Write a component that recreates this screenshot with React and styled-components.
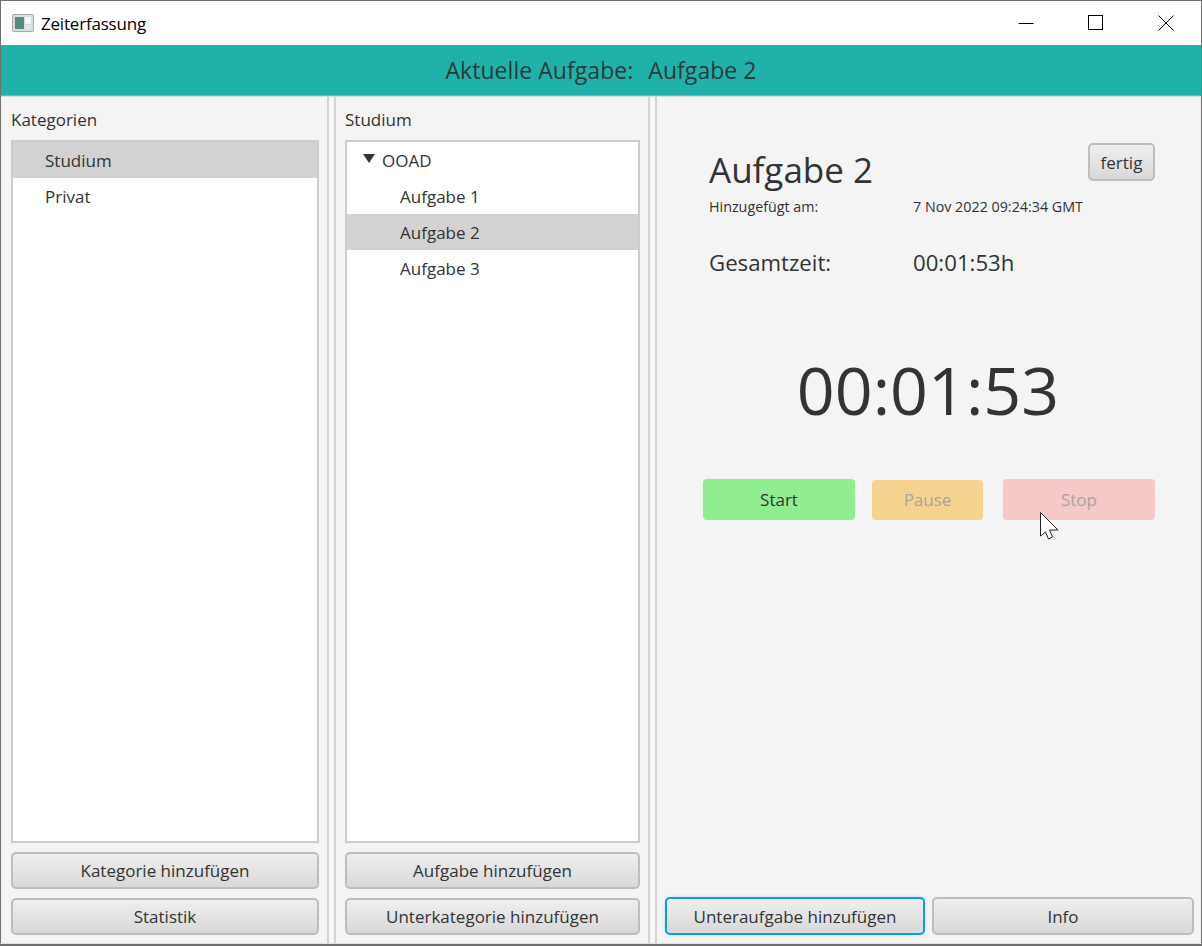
import React from 'react';
import styled, { createGlobalStyle } from 'styled-components';

const GlobalStyle = createGlobalStyle`
  html, body {
    margin: 0;
    padding: 0;
    background: #6e6e6e;
  }
  * {
    box-sizing: border-box;
  }
`;

const Page = styled.div`
  position: relative;
  width: 1202px;
  height: 946px;
  overflow: hidden;
  font-family: "Open Sans", "Noto Sans", sans-serif;
  color: #333;
`;

const Window = styled.div`
  display: flex;
  flex-direction: column;
  height: 944px;
  border: 1px solid #707070;
  border-bottom: 1px solid #e2e2e2;
  background: #f4f4f4;
`;

const TitleBar = styled.div`
  display: flex;
  align-items: center;
  height: 44px;
  flex: none;
  background: #fff;
  padding-left: 11px;
`;

const TitleText = styled.span`
  margin-left: 6px;
  font-size: 17px;
  letter-spacing: -0.2px;
  color: #000;
`;

const WindowButtons = styled.div`
  display: flex;
  margin-left: auto;
`;

const WindowButton = styled.div`
  display: flex;
  align-items: center;
  justify-content: center;
  width: 70px;
  height: 44px;
`;

const Banner = styled.div`
  flex: none;
  display: flex;
  justify-content: center;
  align-items: center;
  gap: 15px;
  height: 51px;
  background: #20b2aa;
  border-bottom: 1px solid #5cc2bc;
  font-size: 23px;
  letter-spacing: 0.05px;
  color: #2b3a39;
`;

const Split = styled.div`
  flex: 1;
  display: flex;
  min-height: 0;
  border-top: 1px solid #dcdcdc;
  padding-left: 1px;
`;

const SidePane = styled.div`
  flex: none;
  display: flex;
  flex-direction: column;
  width: ${(p) => p.$width}px;
  padding: 10px 8px 8px 9px;
`;

const Divider = styled.div`
  flex: none;
  width: 9px;
  background: linear-gradient(to right, #d4d4d4 0 2px, #f7f7f7 2px 7px, #d4d4d4 7px);
`;

const PaneLabel = styled.div`
  height: 33px;
  font-size: 17px;
  line-height: 25px;
`;

const ListBox = styled.div`
  flex: 1;
  min-height: 0;
  border: 2px solid #cdcdcd;
  background: #fff;
  margin-bottom: 9px;
`;

const ListRow = styled.div`
  display: flex;
  align-items: center;
  height: 36px;
  padding-left: ${(p) => p.$indent}px;
  background: ${(p) => (p.$selected ? '#d2d2d2' : 'transparent')};
  font-size: 17px;
`;

const Arrow = styled.span`
  width: 0;
  height: 0;
  margin-right: 7px;
  margin-top: -3px;
  border-left: 6px solid transparent;
  border-right: 6px solid transparent;
  border-top: 9px solid #333;
`;

const Button = styled.button`
  display: block;
  flex: ${(p) => (p.$grow ? p.$grow : 'none')};
  width: ${(p) => (p.$width ? `${p.$width}px` : 'auto')};
  height: ${(p) => p.$height || 37}px;
  margin-top: ${(p) => p.$top || 0}px;
  padding: 0;
  border: 2px solid ${(p) => (p.$focused ? '#0f9ed8' : '#bdbdbd')};
  border-radius: 5px;
  background: linear-gradient(to bottom, #efefef, #d8d8d8);
  box-shadow: ${(p) => (p.$focused ? '0 0 3px #a8dcf0' : 'none')};
  font-family: inherit;
  font-size: 17px;
  color: #333;
`;

const MainPane = styled.div`
  flex: 1;
  min-width: 0;
  display: flex;
  flex-direction: column;
  padding: 0 7px 8px 8px;
`;

const Details = styled.div`
  flex: 1;
  min-height: 0;
  padding: 46px 39px 0 44px;
`;

const HeaderRow = styled.div`
  display: flex;
  justify-content: space-between;
  align-items: flex-start;
`;

const TaskTitle = styled.h1`
  margin: 0;
  font-size: 35px;
  line-height: 54px;
  font-weight: 400;
`;

const InfoRow = styled.div`
  display: grid;
  grid-template-columns: 204px 1fr;
  align-items: center;
  height: ${(p) => p.$height}px;
  margin-top: ${(p) => p.$top}px;
  font-size: ${(p) => p.$size}px;
`;

const Timer = styled.div`
  margin: 62px 8px 0 0;
  text-align: center;
  font-size: 66.3px;
  line-height: 100px;
  color: #333;
`;

const ActionRow = styled.div`
  display: flex;
  align-items: flex-end;
  gap: 17px;
  height: 41px;
  margin: 40px 0 0 -6px;
`;

const ActionButton = styled.div`
  display: flex;
  align-items: center;
  justify-content: center;
  width: ${(p) => p.$width}px;
  height: ${(p) => p.$height}px;
  margin-right: ${(p) => p.$gap || 0}px;
  padding-bottom: ${(p) => (p.$height < 41 ? 2 : 0)}px;
  border-radius: 4px;
  background: ${(p) => p.$color};
  color: ${(p) => (p.$disabled ? '#a8a5a2' : '#333')};
  font-size: 17px;
`;

const BottomRow = styled.div`
  display: flex;
  gap: 7px;
`;

const CursorMark = styled.svg`
  position: absolute;
  left: 1039px;
  top: 511px;
`;

const AppIcon = () => (
  <svg width="23" height="20" viewBox="0 0 23 20">
    <rect x="0.5" y="1.5" width="21" height="17" rx="1.5" fill="#d8dde0" stroke="#a9a9a9" />
    <rect x="3" y="4" width="9" height="12" fill="#4f8f7f" />
    <rect x="13" y="4" width="6" height="7" fill="#f4f6f4" />
    <rect x="13" y="12" width="6" height="4" fill="#e3e8e4" />
  </svg>
);

const App = () => {
  return (
    <Page>
      <GlobalStyle />
      <Window>
        <TitleBar>
          <AppIcon />
          <TitleText>Zeiterfassung</TitleText>
          <WindowButtons>
            <WindowButton>
              <svg width="16" height="16" viewBox="0 0 16 16"><path d="M0.5 8.5H15.5" stroke="#000" fill="none" /></svg>
            </WindowButton>
            <WindowButton>
              <svg width="16" height="16" viewBox="0 0 16 16"><rect x="0.5" y="0.5" width="14" height="14" stroke="#000" fill="none" /></svg>
            </WindowButton>
            <WindowButton>
              <svg width="16" height="16" viewBox="0 0 16 16"><path d="M0.5 0.5L15.5 15.5M15.5 0.5L0.5 15.5" stroke="#000" fill="none" /></svg>
            </WindowButton>
          </WindowButtons>
        </TitleBar>
        <Banner>
          <span>Aktuelle Aufgabe:</span>
          <span>Aufgabe 2</span>
        </Banner>
        <Split>
          <SidePane $width={325}>
            <PaneLabel>Kategorien</PaneLabel>
            <ListBox>
              <ListRow $indent={32} $selected>Studium</ListRow>
              <ListRow $indent={32}>Privat</ListRow>
            </ListBox>
            <Button>Kategorie hinzufügen</Button>
            <Button $top={9}>Statistik</Button>
          </SidePane>
          <Divider />
          <SidePane $width={312}>
            <PaneLabel>Studium</PaneLabel>
            <ListBox>
              <ListRow $indent={16}><Arrow />OOAD</ListRow>
              <ListRow $indent={53}>Aufgabe 1</ListRow>
              <ListRow $indent={53} $selected>Aufgabe 2</ListRow>
              <ListRow $indent={53}>Aufgabe 3</ListRow>
            </ListBox>
            <Button>Aufgabe hinzufügen</Button>
            <Button $top={9}>Unterkategorie hinzufügen</Button>
          </SidePane>
          <Divider />
          <MainPane>
            <Details>
              <HeaderRow>
                <TaskTitle>Aufgabe 2</TaskTitle>
                <Button $width={67} $height={38}>fertig</Button>
              </HeaderRow>
              <InfoRow $height={20} $top={-1} $size={14.3}>
                <span>Hinzugefügt am:</span>
                <span>7 Nov 2022 09:24:34 GMT</span>
              </InfoRow>
              <InfoRow $height={30} $top={31} $size={22.2}>
                <span>Gesamtzeit:</span>
                <span>00:01:53h</span>
              </InfoRow>
              <Timer>00:01:53</Timer>
              <ActionRow>
                <ActionButton $width={152} $height={41} $color="#90ee90">Start</ActionButton>
                <ActionButton $width={111} $height={40} $gap={3} $color="#f6d28f" $disabled>Pause</ActionButton>
                <ActionButton $width={152} $height={41} $color="#f6c8c8" $disabled>Stop</ActionButton>
              </ActionRow>
            </Details>
            <BottomRow>
              <Button $width={260} $height={38} $focused>Unteraufgabe hinzufügen</Button>
              <Button $grow={1} $height={38}>Info</Button>
            </BottomRow>
          </MainPane>
        </Split>
      </Window>
      <CursorMark width="22" height="31" viewBox="0 0 22 31">
        <path d="M1.5 1.5V25L6.5 21L9.5 28L13.5 26L10.5 19H19Z" fill="#fff" stroke="#222" strokeWidth="1" />
      </CursorMark>
    </Page>
  );
};

export default App;
